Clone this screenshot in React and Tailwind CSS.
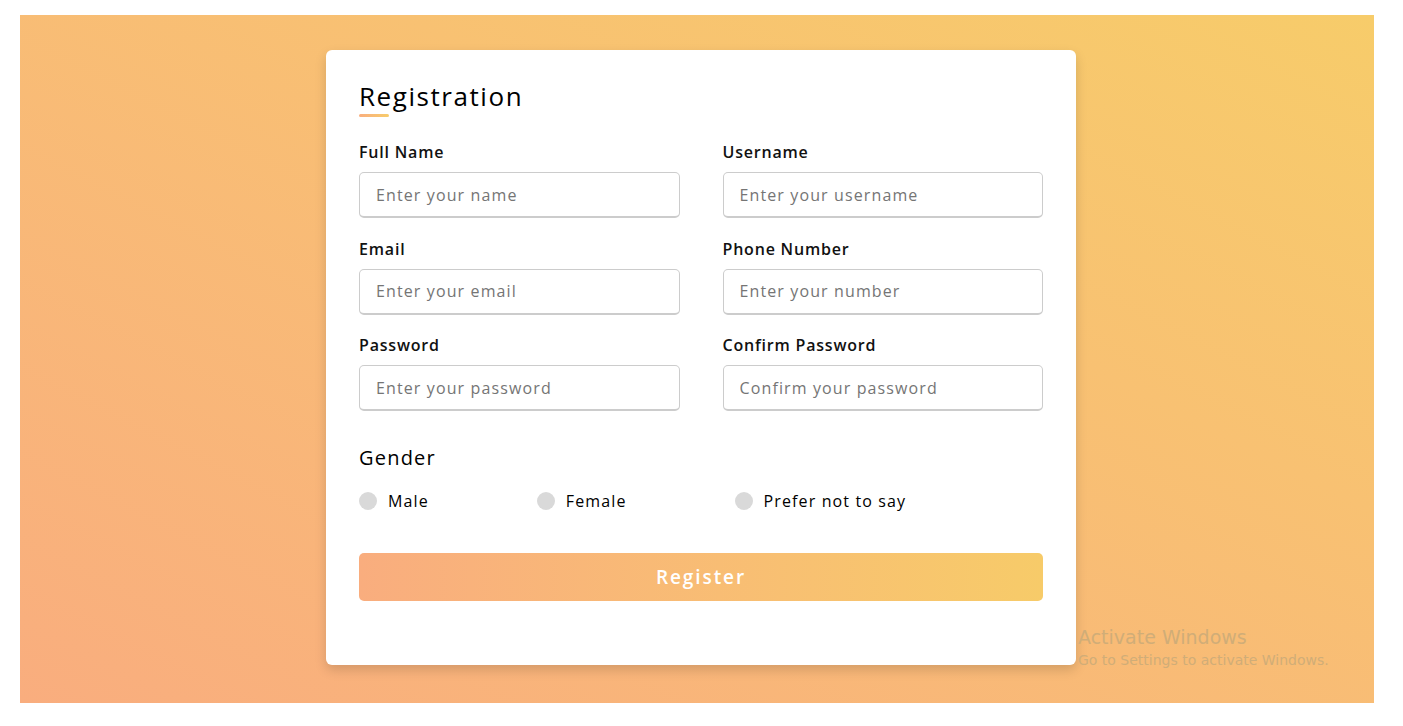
import { useState } from "react";

const fields = [
  { label: "Full Name", placeholder: "Enter your name", type: "text" },
  { label: "Username", placeholder: "Enter your username", type: "text" },
  { label: "Email", placeholder: "Enter your email", type: "text" },
  { label: "Phone Number", placeholder: "Enter your number", type: "text" },
  { label: "Password", placeholder: "Enter your password", type: "text" },
  { label: "Confirm Password", placeholder: "Confirm your password", type: "text" },
];

const genders = ["Male", "Female", "Prefer not to say"];

export default function App() {
  const [gender, setGender] = useState("");

  return (
    <div className="min-h-screen bg-white pt-[15px] pl-[20px] pr-[29px] pb-[23px] font-['Open_Sans',sans-serif]">
      <div className="relative h-[688px] bg-linear-to-tr from-[#f9ad7e] to-[#f7cc6a] pt-[35px] pl-[306px]">
        <div className="w-[750px] h-[615px] bg-white rounded-[6px] shadow-[0_5px_12px_rgba(0,0,0,0.15)] px-[33px] pt-[30px]">
          <div className="relative pb-[4px]">
            <h1 className="text-[26px] leading-[33px] font-medium tracking-[0.06em] text-black">Registration</h1>
            <span className="absolute left-0 bottom-[0px] h-[3px] w-[30px] rounded-sm bg-linear-to-r from-[#f9ae7e] to-[#f7cc6a]" />
          </div>

          <form className="mt-[23px]">
            <div className="grid grid-cols-2 gap-x-[43px] gap-y-[18.5px]">
              {fields.map((f) => (
                <div key={f.label}>
                  <label className="block text-[16px] leading-[24px] font-semibold tracking-[0.05em] text-[#111] mb-[8px]">
                    {f.label}
                  </label>
                  <input
                    type={f.type}
                    placeholder={f.placeholder}
                    className="w-full h-[46px] rounded-[5px] border border-[#cccccc] border-b-2 px-[16px] text-[16px] tracking-[0.07em] outline-none placeholder:text-[#757575]"
                  />
                </div>
              ))}
            </div>

            <div className="mt-[32px]">
              <div className="text-[20px] leading-[30px] font-medium tracking-[0.06em] text-black">Gender</div>
              <div className="mt-[16px] w-[80%] flex justify-between">
                {genders.map((g) => (
                  <label key={g} className="flex items-center cursor-pointer" onClick={() => setGender(g)}>
                    <span
                      className={
                        gender === g
                          ? "w-[18px] h-[18px] rounded-full bg-[#f8bb73]"
                          : "w-[18px] h-[18px] rounded-full bg-[#d9d9d9]"
                      }
                    />
                    <span className="ml-[11px] text-[16px] leading-[24px] tracking-[0.07em] text-black">{g}</span>
                  </label>
                ))}
              </div>
            </div>

            <button
              type="button"
              className="mt-[40px] w-full h-[48px] rounded-[5px] bg-linear-to-r from-[#f9ad7e] to-[#f7cb69] text-white text-[19px] font-semibold tracking-[0.1em]"
            >
              Register
            </button>
          </form>
        </div>

        <div className="absolute left-[1058px] top-[610px] font-['DejaVu_Sans',sans-serif] text-[#d0ad78] pointer-events-none">
          <div className="text-[19px] leading-[24px]">Activate Windows</div>
          <div className="text-[14px] leading-[22px]">Go to Settings to activate Windows.</div>
        </div>
      </div>
    </div>
  );
}
